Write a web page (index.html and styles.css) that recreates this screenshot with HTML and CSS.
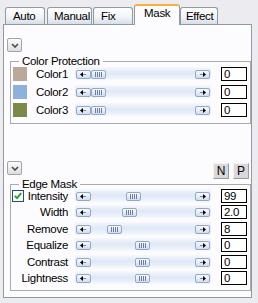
FILE: index.html
```html
<!DOCTYPE html>
<html>
<head>
  <title>Mask</title>
  <link rel="stylesheet" href="styles.css">
</head>
<body>
<div class="tabs">
  <div class="tab tab-auto">Auto</div>
  <div class="tab tab-manual">Manual</div>
  <div class="tab tab-fix">Fix</div>
  <div class="tab tab-mask active">Mask</div>
  <div class="tab tab-effect">Effect</div>
</div>
<div class="panel">
  <button class="collapse"><svg width="8" height="5"><path d="M1 1l3 3 3-3" fill="none" stroke="#4a4a4a" stroke-width="1.6"/></svg></button>
  <fieldset class="group group-color">
    <legend>Color Protection</legend>
    <div class="rows">
      <div class="row">
        <div class="row-label"><span class="swatch" style="background:#baa999"></span>Color1</div>
        <div class="slider">
          <span class="arrow"><svg width="7" height="5"><path d="M0 2.5L3 0v5z"/><rect x="3" y="2" width="3" height="1" fill="#7d8696"/></svg></span>
          <span class="rail"><span class="thumb" style="margin-left:0px"></span></span>
          <span class="arrow"><svg width="7" height="5"><rect x="1" y="2" width="3" height="1" fill="#7d8696"/><path d="M7 2.5L4 0v5z"/></svg></span>
        </div>
        <div class="value">0</div>
      </div>
      <div class="row">
        <div class="row-label"><span class="swatch" style="background:#8db0dc"></span>Color2</div>
        <div class="slider">
          <span class="arrow"><svg width="7" height="5"><path d="M0 2.5L3 0v5z"/><rect x="3" y="2" width="3" height="1" fill="#7d8696"/></svg></span>
          <span class="rail"><span class="thumb" style="margin-left:0px"></span></span>
          <span class="arrow"><svg width="7" height="5"><rect x="1" y="2" width="3" height="1" fill="#7d8696"/><path d="M7 2.5L4 0v5z"/></svg></span>
        </div>
        <div class="value">0</div>
      </div>
      <div class="row">
        <div class="row-label"><span class="swatch" style="background:#7b8a48"></span>Color3</div>
        <div class="slider">
          <span class="arrow"><svg width="7" height="5"><path d="M0 2.5L3 0v5z"/><rect x="3" y="2" width="3" height="1" fill="#7d8696"/></svg></span>
          <span class="rail"><span class="thumb" style="margin-left:0px"></span></span>
          <span class="arrow"><svg width="7" height="5"><rect x="1" y="2" width="3" height="1" fill="#7d8696"/><path d="M7 2.5L4 0v5z"/></svg></span>
        </div>
        <div class="value">0</div>
      </div>
    </div>
  </fieldset>

  <div class="section-head">
    <button class="collapse"><svg width="8" height="5"><path d="M1 1l3 3 3-3" fill="none" stroke="#4a4a4a" stroke-width="1.6"/></svg></button>
    <div class="np">
      <button class="np-btn">N</button>
      <button class="np-btn">P</button>
    </div>
  </div>

  <fieldset class="group group-edge">
    <legend>Edge Mask</legend>
    <div class="rows">
      <div class="row">
        <div class="row-label edge"><svg class="check" width="12" height="12"><rect x="0.5" y="0.5" width="11" height="11" fill="#fff" stroke="#1c5180"/><path d="M2.8 5.8l2.2 2.4 4.2-5" fill="none" stroke="#21a121" stroke-width="1.8"/></svg>Intensity</div>
        <div class="slider">
          <span class="arrow"><svg width="7" height="5"><path d="M0 2.5L3 0v5z"/><rect x="3" y="2" width="3" height="1" fill="#7d8696"/></svg></span>
          <span class="rail"><span class="thumb" style="margin-left:35px"></span></span>
          <span class="arrow"><svg width="7" height="5"><rect x="1" y="2" width="3" height="1" fill="#7d8696"/><path d="M7 2.5L4 0v5z"/></svg></span>
        </div>
        <div class="value">99</div>
      </div>
      <div class="row">
        <div class="row-label edge">Width</div>
        <div class="slider">
          <span class="arrow"><svg width="7" height="5"><path d="M0 2.5L3 0v5z"/><rect x="3" y="2" width="3" height="1" fill="#7d8696"/></svg></span>
          <span class="rail"><span class="thumb" style="margin-left:31px"></span></span>
          <span class="arrow"><svg width="7" height="5"><rect x="1" y="2" width="3" height="1" fill="#7d8696"/><path d="M7 2.5L4 0v5z"/></svg></span>
        </div>
        <div class="value">2.0</div>
      </div>
      <div class="row">
        <div class="row-label edge">Remove</div>
        <div class="slider">
          <span class="arrow"><svg width="7" height="5"><path d="M0 2.5L3 0v5z"/><rect x="3" y="2" width="3" height="1" fill="#7d8696"/></svg></span>
          <span class="rail"><span class="thumb" style="margin-left:16px"></span></span>
          <span class="arrow"><svg width="7" height="5"><rect x="1" y="2" width="3" height="1" fill="#7d8696"/><path d="M7 2.5L4 0v5z"/></svg></span>
        </div>
        <div class="value">8</div>
      </div>
      <div class="row">
        <div class="row-label edge">Equalize</div>
        <div class="slider">
          <span class="arrow"><svg width="7" height="5"><path d="M0 2.5L3 0v5z"/><rect x="3" y="2" width="3" height="1" fill="#7d8696"/></svg></span>
          <span class="rail"><span class="thumb" style="margin-left:44px"></span></span>
          <span class="arrow"><svg width="7" height="5"><rect x="1" y="2" width="3" height="1" fill="#7d8696"/><path d="M7 2.5L4 0v5z"/></svg></span>
        </div>
        <div class="value">0</div>
      </div>
      <div class="row">
        <div class="row-label edge">Contrast</div>
        <div class="slider">
          <span class="arrow"><svg width="7" height="5"><path d="M0 2.5L3 0v5z"/><rect x="3" y="2" width="3" height="1" fill="#7d8696"/></svg></span>
          <span class="rail"><span class="thumb" style="margin-left:44px"></span></span>
          <span class="arrow"><svg width="7" height="5"><rect x="1" y="2" width="3" height="1" fill="#7d8696"/><path d="M7 2.5L4 0v5z"/></svg></span>
        </div>
        <div class="value">0</div>
      </div>
      <div class="row">
        <div class="row-label edge">Lightness</div>
        <div class="slider">
          <span class="arrow"><svg width="7" height="5"><path d="M0 2.5L3 0v5z"/><rect x="3" y="2" width="3" height="1" fill="#7d8696"/></svg></span>
          <span class="rail"><span class="thumb" style="margin-left:44px"></span></span>
          <span class="arrow"><svg width="7" height="5"><rect x="1" y="2" width="3" height="1" fill="#7d8696"/><path d="M7 2.5L4 0v5z"/></svg></span>
        </div>
        <div class="value">0</div>
      </div>
    </div>
  </fieldset>
</div>
</body>
</html>
```
FILE: styles.css
```css
* {
  box-sizing: border-box;
}
body {
  margin: 0;
  background: #ecebf0;
  font-family: "Liberation Sans", Arial, sans-serif;
  font-size: 11.5px;
  letter-spacing: -0.3px;
  color: #000;
}

/* tab strip */
.tabs {
  display: flex;
  align-items: flex-end;
  height: 24px;
  padding-left: 5px;
}
.tab {
  height: 17px;
  line-height: 16px;
  padding-left: 6px;
  border: 1px solid #919b9c;
  border-bottom: none;
  border-radius: 3px 3px 0 0;
  background: linear-gradient(#fefefe, #f3f4f8 55%, #d6deea);
  white-space: nowrap;
}
.tab-auto { width: 40px; margin-right: 2px; padding-left: 7px; }
.tab-manual { width: 45px; margin-right: 1px; }
.tab-fix { width: 40px; margin-right: 1px; padding-left: 7px; }
.tab-mask { width: 46px; }
.tab-effect { width: 38px; padding-left: 5px; }
.tab.active {
  position: relative;
  z-index: 1;
  height: 21px;
  margin-bottom: -1px;
  line-height: 14px;
  padding-left: 9px;
  background: #fcfcfe;
  border-top: 2px solid #f7b138;
}

/* page */
.panel {
  margin-left: 3px;
  width: 249px;
  border: 1px solid #919b9c;
  background: #fcfcfe;
  padding: 13px 0 6px 3px;
}
.collapse {
  display: flex;
  align-items: center;
  justify-content: center;
  width: 15px;
  height: 14px;
  margin: 0;
  padding: 0;
  border: 1px solid #a3a3a8;
  border-radius: 2px;
  background: linear-gradient(#fbfbfb, #dedee2);
}
.group {
  margin: 4px 0 0 3px;
  padding: 1px 3px 6px 0;
  border: 1px solid #a9a9ae;
  min-width: 0;
}
.group legend {
  margin-left: 8px;
  padding: 0 3px;
  line-height: 10px;
}
.rows {
  display: flex;
  flex-direction: column;
  gap: 4px;
}
.group-edge {
  margin-top: 0;
  padding-top: 0;
  padding-bottom: 5px;
}
.group-edge .rows {
  gap: 2.4px;
}
.section-head {
  display: flex;
  justify-content: space-between;
  height: 18px;
  margin-top: 37px;
}
.np {
  display: flex;
  gap: 4px;
  align-self: flex-end;
  margin-right: 2px;
}
.np-btn {
  width: 16px;
  height: 16px;
  margin: 0;
  padding: 0;
  font: inherit;
  font-size: 12px;
  line-height: 14px;
  color: #000;
  border: 1px solid;
  border-color: #f4f4f4 #9a9a9a #9a9a9a #f4f4f4;
  background: #d9d9dc;
}

/* rows */
.row {
  display: flex;
  align-items: center;
  height: 14px;
}
.row-label {
  display: flex;
  align-items: center;
  width: 57px;
  height: 14px;
  margin-right: 7px;
  line-height: 14px;
  white-space: nowrap;
}
.row-label.edge {
  justify-content: flex-end;
}
.swatch {
  width: 16px;
  height: 14px;
  margin: 0 9px 0 2px;
}
.check {
  margin: 0 auto 0 1px;
}
.slider {
  display: flex;
  align-items: flex-start;
  width: 136px;
  height: 14px;
  padding: 3px 1px 0;
  background: linear-gradient(#f6f8fc, #dfe8f6 45%, #eef3fa 80%, #fbfcfe);
}
.arrow,
.thumb {
  display: flex;
  align-items: center;
  justify-content: center;
  width: 15px;
  height: 9px;
  border: 1px solid #94a7c6;
  border-radius: 2px;
  background: linear-gradient(#f7f9fd, #d2ddef);
}
.rail {
  flex: 1;
  display: flex;
}
.thumb::before {
  content: "";
  width: 7px;
  height: 5px;
  background: repeating-linear-gradient(90deg, #6f7d9c 0 1px, transparent 1px 2px);
}
.value {
  width: 26px;
  height: 14px;
  margin-left: 10px;
  padding-left: 2px;
  border: 1px solid #000;
  background: #fff;
  line-height: 12px;
}
```
